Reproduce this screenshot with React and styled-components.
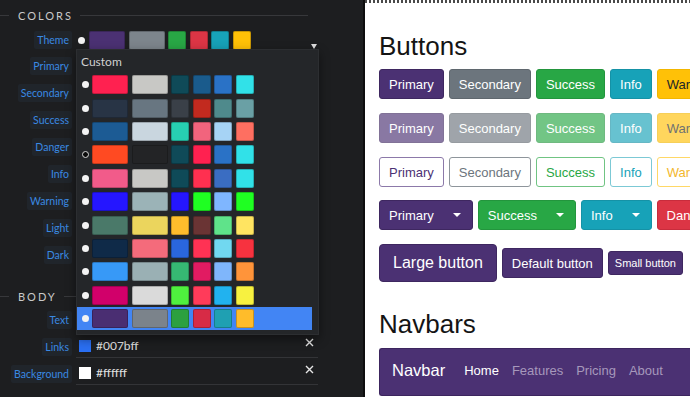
import React from "react";
import styled, { createGlobalStyle, css } from "styled-components";

const GlobalStyle = createGlobalStyle`
  html, body {
    margin: 0;
    padding: 0;
  }
  body {
    background: #1d1e20;
    overflow: hidden;
  }
`;

const Layout = styled.div`
  display: flex;
  height: 397px;
  overflow: hidden;
`;

/* ---------- left settings panel ---------- */

const Sidebar = styled.aside`
  width: 365px;
  flex: none;
  box-sizing: border-box;
  padding: 4px 45px 0 0;
  background: #1d1e20;
  border-right: 2px solid #0d0d0e;
  font-family: Lato, "Noto Sans", sans-serif;
`;

const SectionTitle = styled.div`
  display: flex;
  align-items: center;
  height: 22px;
  margin-top: ${(p) => (p.$first ? 0 : 16)}px;
  color: #c9c9c9;
  font-size: 11px;
  letter-spacing: 2px;
  text-transform: uppercase;

  &::before,
  &::after {
    content: "";
    height: 1px;
    background: #37383b;
  }
  &::before {
    width: 9px;
    margin-right: 9px;
  }
  &::after {
    flex: 1;
    margin: 0 10px 0 7px;
  }
`;

const Row = styled.div`
  display: flex;
  align-items: flex-start;
  height: 27px;
`;

const LabelCol = styled.div`
  width: 72px;
  flex: none;
  display: flex;
  justify-content: flex-end;
  padding-top: ${(p) => (p.$theme ? 5 : 4)}px;
`;

const Label = styled.span`
  background: #20252b;
  color: #3a89e2;
  font-size: 10.5px;
  line-height: 18px;
  padding: 0 3px;
  border-radius: 2px;
`;

const Value = styled.div`
  position: relative;
  flex: 1;
  margin-left: 4px;
  height: 24px;
  box-sizing: border-box;
  border-bottom: 1px solid #333437;
  display: flex;
  align-items: ${(p) => (p.$theme ? "flex-start" : "center")};
  padding: ${(p) => (p.$theme ? "5px 0 0 1.5px" : "0 4px 0 3px")};
  color: #e2e2e2;
  font-size: 12px;
`;

const ColorChip = styled.span`
  width: 12px;
  height: 12px;
  margin-right: 5px;
  background: ${(p) => p.$color};
`;

const Clear = styled.svg`
  margin-left: auto;
  margin-top: -7px;
`;

const Caret = styled.span`
  margin: 13px 1.5px 0 auto;
  border-left: 3.5px solid transparent;
  border-right: 3.5px solid transparent;
  border-top: 5px solid #dedede;
`;

const Radio = styled.span`
  flex: none;
  box-sizing: border-box;
  width: 7px;
  height: 7px;
  margin-right: ${(p) => (p.$theme ? 4.5 : 3)}px;
  border-radius: 50%;
  background: #f3f3f3;
  ${(p) =>
    p.$empty &&
    css`
      background: #0b0b0b;
      border: 1px solid #d8d8d8;
    `}
  ${(p) => p.$theme && "margin-top: 6px;"}
`;

const Swatches = styled.div`
  display: flex;
  gap: 3.5px;
`;

const Swatch = styled.span`
  width: ${(p) => (p.$wide ? 36 : 18)}px;
  height: 19px;
  border-radius: 2px;
  background: ${(p) => p.$color};
  box-shadow: inset 0 0 0 1px rgba(0, 0, 0, 0.22);
`;

const Menu = styled.div`
  position: absolute;
  top: 23px;
  left: 0;
  z-index: 5;
  width: 243px;
  box-sizing: border-box;
  padding-bottom: 4px;
  background: #242629;
  border: 1px solid #2c2e31;
  box-shadow: 0 4px 10px rgba(0, 0, 0, 0.45);
`;

const MenuHeading = styled.div`
  height: 23px;
  line-height: 23px;
  padding-left: 4px;
  color: #d0d0d0;
  font-size: 12px;
`;

const Option = styled.div`
  display: flex;
  align-items: center;
  height: 23.4px;
  margin-right: 6px;
  padding-left: 5px;
  background: ${(p) => (p.$active ? "#4285f4" : "transparent")};
`;

/* ---------- right preview ---------- */

const Preview = styled.main`
  flex: 1;
  min-width: 0;
  overflow: hidden;
  padding: 3px 0 0 14px;
  background: repeating-linear-gradient(90deg, #4a4a4a 0 2px, #ffffff 2px 4px)
      top / 100% 3px no-repeat,
    #ffffff;
  font-family: "Liberation Sans", Arial, sans-serif;
`;

const Heading = styled.h2`
  margin: ${(p) => (p.$first ? 28 : 27)}px 0 ${(p) => (p.$first ? 7 : 8)}px;
  font-size: 26px;
  font-weight: 400;
  line-height: 31px;
  color: #141414;
`;

const ButtonRow = styled.div`
  display: flex;
  align-items: center;
  gap: 5px;
  margin-bottom: ${(p) => p.$space ?? 14}px;
  white-space: nowrap;
`;

const variants = {
  primary: { bg: "#4b3173", border: "#3e2760", text: "#fff", line: "#8c79a9" },
  secondary: { bg: "#6c757d", border: "#5f676e", text: "#fff", line: "#8e959b" },
  success: { bg: "#28a745", border: "#23953d", text: "#fff", line: "#70c483" },
  info: { bg: "#17a2b8", border: "#1592a6", text: "#fff", line: "#7cc9d5" },
  warning: { bg: "#ffc107", border: "#f2b600", text: "#212529", line: "#ffd866" },
  danger: { bg: "#dc3545", border: "#c82c3c", text: "#fff", line: "#ea8791" },
};

const sizes = {
  lg: css`
    height: 38px;
    padding: 0 13px;
    font-size: 16px;
    border-radius: 4px;
  `,
  md: css`
    height: 30px;
    padding: 0 9px;
    font-size: 13px;
  `,
  sm: css`
    height: 24px;
    padding: 0 6px;
    font-size: 11px;
  `,
};

const Button = styled.button`
  flex: none;
  display: inline-flex;
  align-items: center;
  box-sizing: border-box;
  font-family: inherit;
  border-radius: 3px;
  border: 1px solid ${(p) => variants[p.$variant].border};
  background: ${(p) => variants[p.$variant].bg};
  color: ${(p) => variants[p.$variant].text};
  ${(p) => sizes[p.$size || "md"]}
  ${(p) =>
    p.$outline &&
    css`
      background: #fff;
      border-color: ${variants[p.$variant].line};
      color: ${p.$variant === "warning" ? "#f3b72c" : variants[p.$variant].bg};
    `}
  ${(p) => p.$disabled && "opacity: 0.65;"}
  ${(p) => p.$caret && "padding-right: 11px;"}
`;

const DropCaret = styled.span`
  margin-left: 19px;
  border-left: 4px solid transparent;
  border-right: 4px solid transparent;
  border-top: 4px solid currentColor;
`;

const Navbar = styled.nav`
  display: flex;
  align-items: center;
  height: 48px;
  box-sizing: border-box;
  padding: 0 12px 4px;
  background: #4b3173;
  border: 1px solid #3c255e;
  border-right: none;
  border-radius: 3px 0 0 3px;
`;

const Brand = styled.span`
  margin-right: 19px;
  color: #fff;
  font-size: 16.5px;
`;

const NavLinks = styled.div`
  display: flex;
  gap: 13px;
`;

const NavLink = styled.span`
  font-size: 13px;
  color: ${(p) => (p.$active ? "#ffffff" : "#a698bb")};
`;

/* ---------- data ---------- */

const themeColors = ["#4b3173", "#7d858c", "#28a745", "#dc3545", "#17a2b8", "#ffc107"];

const palettes = [
  ["#ff2150", "#c8c8c5", "#0f4a58", "#1a5b8c", "#2a72c6", "#31e1e8"],
  ["#283445", "#687681", "#3a4048", "#c22a1f", "#4f8a8c", "#6aa0a5"],
  ["#1c5b94", "#c9d6df", "#27d0b2", "#f2647d", "#a6d3f5", "#fe6f61"],
  ["#ff4a22", "#232426", "#0f4a58", "#ff2150", "#2a72c6", "#31e1e8"],
  ["#f25b8a", "#c8c8c5", "#0f4a58", "#ff3050", "#3a6dc2", "#31e1e8"],
  ["#2516ff", "#9bb3b7", "#2516ff", "#1fff22", "#7fb6ff", "#1fff22"],
  ["#4a7969", "#ebd55d", "#ffbd2c", "#6a3434", "#5fe38a", "#ffe461"],
  ["#0f2a48", "#f46b7b", "#2a66dd", "#ff3254", "#71d8f0", "#f7323f"],
  ["#3799f7", "#9ab0b4", "#36b873", "#e11b62", "#7fb6fb", "#ff943a"],
  ["#d1006a", "#dadada", "#4ff13e", "#ff3b5a", "#21b2ef", "#f7f140"],
  ["#4a2e72", "#7b838b", "#2ca040", "#d72b46", "#1fa0b2", "#ffbc2a"],
];

const colorRows = [
  ["Primary", "#4b3173"],
  ["Secondary", "#7d858c"],
  ["Success", "#28a745"],
  ["Danger", "#dc3545"],
  ["Info", "#17a2b8"],
  ["Warning", "#ffc107"],
  ["Light", "#f8f9fa"],
  ["Dark", "#343a40"],
];

const bodyRows = [
  ["Text", "#212529"],
  ["Links", "#2a6ff2", "#007bff"],
  ["Background", "#ffffff", "#ffffff"],
];

const mainVariants = ["primary", "secondary", "success", "info", "warning"];

const SwatchSet = ({ colors }) => (
  <Swatches>
    {colors.map((c, i) => (
      <Swatch key={i} $wide={i < 2} $color={c} />
    ))}
  </Swatches>
);

const ClearIcon = () => (
  <Clear width="9" height="9" viewBox="0 0 9 9">
    <path d="M1 1l7 7M8 1L1 8" stroke="#e6e6e6" strokeWidth="1.4" />
  </Clear>
);

const ColorRow = ({ label, color, hex }) => (
  <Row>
    <LabelCol>
      <Label>{label}</Label>
    </LabelCol>
    <Value>
      <ColorChip $color={color} />
      {hex || color}
      <ClearIcon />
    </Value>
  </Row>
);

const label = (v) => v.charAt(0).toUpperCase() + v.slice(1);

export default function App() {
  return (
    <Layout>
      <GlobalStyle />
      <Sidebar>
        <SectionTitle $first>Colors</SectionTitle>
        <Row>
          <LabelCol $theme>
            <Label>Theme</Label>
          </LabelCol>
          <Value $theme>
            <Radio $theme />
            <SwatchSet colors={themeColors} />
            <Caret />
            <Menu>
              <MenuHeading>Custom</MenuHeading>
              {palettes.map((p, i) => (
                <Option key={i} $active={i === palettes.length - 1}>
                  <Radio $empty={i === 3} />
                  <SwatchSet colors={p} />
                </Option>
              ))}
            </Menu>
          </Value>
        </Row>
        {colorRows.map(([l, c]) => (
          <ColorRow key={l} label={l} color={c} />
        ))}

        <SectionTitle>Body</SectionTitle>
        {bodyRows.map(([l, c, hex]) => (
          <ColorRow key={l} label={l} color={c} hex={hex} />
        ))}
      </Sidebar>

      <Preview>
        <Heading $first>Buttons</Heading>
        <ButtonRow>
          {mainVariants.map((v) => (
            <Button key={v} $variant={v}>
              {label(v)}
            </Button>
          ))}
        </ButtonRow>
        <ButtonRow>
          {mainVariants.map((v) => (
            <Button key={v} $variant={v} $disabled>
              {label(v)}
            </Button>
          ))}
        </ButtonRow>
        <ButtonRow $space={13}>
          {mainVariants.map((v) => (
            <Button key={v} $variant={v} $outline>
              {label(v)}
            </Button>
          ))}
        </ButtonRow>
        <ButtonRow $space={14}>
          {["primary", "success", "info", "danger"].map((v) => (
            <Button key={v} $variant={v} $caret>
              {label(v)}
              <DropCaret />
            </Button>
          ))}
        </ButtonRow>
        <ButtonRow $space={0}>
          <Button $variant="primary" $size="lg">
            Large button
          </Button>
          <Button $variant="primary">Default button</Button>
          <Button $variant="primary" $size="sm">
            Small button
          </Button>
        </ButtonRow>

        <Heading>Navbars</Heading>
        <Navbar>
          <Brand>Navbar</Brand>
          <NavLinks>
            <NavLink $active>Home</NavLink>
            <NavLink>Features</NavLink>
            <NavLink>Pricing</NavLink>
            <NavLink>About</NavLink>
          </NavLinks>
        </Navbar>
      </Preview>
    </Layout>
  );
}
